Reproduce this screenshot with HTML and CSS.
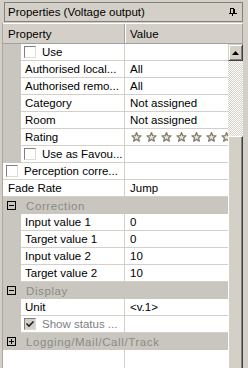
FILE: index.html
```html
<!DOCTYPE html>
<html lang="en">
<head>
<meta charset="UTF-8">
<meta name="viewport" content="width=device-width, initial-scale=1.0">
<title>Properties</title>
<link rel="stylesheet" href="styles.css">
</head>
<body>
<svg width="0" height="0" class="defs">
    <symbol id="star" viewBox="0 0 22 20">
        <polygon points="11,1.2 13.5,7.3 20.2,7.6 15,11.8 16.7,18.4 11,14.7 5.3,18.4 7,11.8 1.8,7.6 8.5,7.3" fill="#ebe6d8" stroke="#877d6c" stroke-width="2.6" stroke-linejoin="round"/>
    </symbol>
</svg>
<div class="panel">
    <div class="title">
        <span>Properties (Voltage output)</span>
        <svg class="pin" width="8" height="8" viewBox="0 0 8 8" shape-rendering="crispEdges">
            <path d="M1 0h4v1H1zM1 1h1v4H1zM4 1h2v4H4zM0 5h8v1H0zM3 6h1v2H3z" fill="#000"/>
        </svg>
    </div>
    <div class="grid">
        <div class="head">
            <div class="hcell prop">Property</div>
            <div class="hcell val">Value</div>
        </div>
        <div class="body">
            <div class="rows">
                <div class="row sub"><div class="gutter"></div><div class="cell prop chk"><span class="check"></span>Use</div><div class="cell val"></div></div>
                <div class="row sub"><div class="gutter"></div><div class="cell prop">Authorised local...</div><div class="cell val">All</div></div>
                <div class="row sub"><div class="gutter"></div><div class="cell prop">Authorised remo...</div><div class="cell val">All</div></div>
                <div class="row sub"><div class="gutter"></div><div class="cell prop">Category</div><div class="cell val">Not assigned</div></div>
                <div class="row sub"><div class="gutter"></div><div class="cell prop">Room</div><div class="cell val">Not assigned</div></div>
                <div class="row sub"><div class="gutter"></div><div class="cell prop">Rating</div>
                    <div class="cell val">
                        <div class="stars">
                            <svg><use href="#star"/></svg><svg><use href="#star"/></svg><svg><use href="#star"/></svg><svg><use href="#star"/></svg><svg><use href="#star"/></svg><svg><use href="#star"/></svg><svg><use href="#star"/></svg>
                        </div>
                    </div>
                </div>
                <div class="row sub"><div class="gutter"></div><div class="cell prop chk"><span class="check"></span>Use as Favou...</div><div class="cell val"></div></div>
                <div class="row"><div class="cell prop chk"><span class="check"></span>Perception corre...</div><div class="cell val"></div></div>
                <div class="row"><div class="cell prop">Fade Rate</div><div class="cell val">Jump</div></div>

                <div class="row cat"><span class="toggle open"></span>Correction</div>
                <div class="row sub"><div class="gutter"></div><div class="cell prop">Input value 1</div><div class="cell val">0</div></div>
                <div class="row sub"><div class="gutter"></div><div class="cell prop">Target value 1</div><div class="cell val">0</div></div>
                <div class="row sub"><div class="gutter"></div><div class="cell prop">Input value 2</div><div class="cell val">10</div></div>
                <div class="row sub"><div class="gutter"></div><div class="cell prop">Target value 2</div><div class="cell val">10</div></div>

                <div class="row cat"><span class="toggle open"></span>Display</div>
                <div class="row sub"><div class="gutter"></div><div class="cell prop">Unit</div><div class="cell val">&lt;v.1&gt;</div></div>
                <div class="row sub disabled"><div class="gutter"></div><div class="cell prop chk"><span class="check on"><svg width="10" height="10" viewBox="0 0 10 10"><path d="M1.5 4.5l2.5 2.5 4.5-4.5" fill="none" stroke="#222" stroke-width="1.6"/></svg></span>Show status ...</div><div class="cell val"></div></div>

                <div class="row cat"><span class="toggle"></span>Logging/Mail/Call/Track</div>
                <div class="row empty"><div class="cell prop"></div><div class="cell val"></div></div>
            </div>
            <div class="vscroll">
                <div class="sbtn">
                    <svg width="7" height="4" viewBox="0 0 7 4"><polygon points="0,4 7,4 3.5,0" fill="#000"/></svg>
                </div>
                <div class="track"></div>
                <div class="thumb"></div>
            </div>
        </div>
    </div>
</div>
</body>
</html>
```

FILE: styles.css
```css
html, body {
    margin: 0;
    padding: 0;
}
body {
    width: 248px;
    height: 368px;
    overflow: hidden;
    background-color: #d4d0c8;
    font-family: "Liberation Sans", Arial, sans-serif;
    font-size: 11.5px;
    color: #000;
}
.defs {
    position: absolute;
}
.panel {
    padding: 2px 0 0 2px;
    width: 241px;
}
.title {
    margin: 0 0 1px 2px;
    height: 20px;
    box-sizing: border-box;
    border: 1px solid #808080;
    display: flex;
    align-items: center;
    justify-content: space-between;
    padding: 0 5px 1px 3px;
}
.pin {
    display: block;
}
.grid {
    border-left: 1px solid #aca89f;
}
.head {
    display: flex;
    height: 21px;
    box-sizing: border-box;
    border-top: 1px solid #fff;
    border-bottom: 1px solid #a0a0a0;
    border-right: 1px solid #a0a0a0;
}
.hcell {
    display: flex;
    align-items: center;
    padding-left: 5px;
}
.hcell.prop {
    width: 116px;
    border-right: 1px solid #a0a0a0;
}
.hcell.val {
    flex: 1;
    border-left: 1px solid #fff;
    padding-left: 4px;
}
.body {
    display: flex;
}
.rows {
    width: 225px;
    background-color: #fff;
}
.row {
    display: flex;
    height: 17px;
}
.gutter {
    width: 18px;
    flex: none;
    background-color: #c9c6bf;
}
.cell {
    box-sizing: border-box;
    border-bottom: 1px solid #d4d0c8;
    display: flex;
    align-items: center;
    white-space: nowrap;
    overflow: hidden;
}
.cell.prop {
    flex: 1;
    padding-left: 5px;
}
.sub .cell.prop {
    padding-left: 4px;
}
.cell.prop.chk {
    padding-left: 3px;
}
.cell.val {
    width: 104px;
    flex: none;
    border-left: 1px solid #d4d0c8;
    padding-left: 5px;
}
.check {
    width: 12px;
    height: 12px;
    box-sizing: border-box;
    flex: none;
    border: 1px solid;
    border-color: #808080 #dedbd4 #dedbd4 #808080;
    background-color: #fff;
    margin-right: 6px;
    display: flex;
    align-items: center;
    justify-content: center;
}
.check.on {
    background-color: #d4d0c8;
}
.check svg {
    display: block;
}
.disabled .cell {
    color: #808080;
}
.stars {
    display: flex;
    gap: 4px;
    margin-left: 1px;
}
.stars svg {
    width: 11px;
    height: 10px;
    flex: none;
}
.row.cat {
    background-color: #c9c6bf;
    align-items: center;
    color: #8c8a86;
    letter-spacing: 0.6px;
    white-space: nowrap;
}
.toggle {
    position: relative;
    width: 9px;
    height: 9px;
    box-sizing: border-box;
    border: 1px solid #000;
    margin: 0 10px 0 4px;
    flex: none;
}
.toggle::before,
.toggle::after {
    content: "";
    position: absolute;
    background-color: #000;
}
.toggle::before {
    left: 1px;
    top: 3px;
    width: 5px;
    height: 1px;
}
.toggle::after {
    left: 3px;
    top: 1px;
    width: 1px;
    height: 5px;
}
.toggle.open::after {
    display: none;
}
.row.empty {
    height: 20px;
}
.row.empty .cell {
    border-bottom: none;
}
.vscroll {
    width: 15px;
    display: flex;
    flex-direction: column;
}
.sbtn {
    height: 17px;
    box-sizing: border-box;
    border: 1px solid;
    border-color: #d4d0c8 #404040 #404040 #d4d0c8;
    box-shadow: inset 1px 1px #fff, inset -1px -1px #808080;
    display: flex;
    align-items: center;
    justify-content: center;
}
.sbtn svg {
    display: block;
}
.track {
    height: 75px;
    background: repeating-conic-gradient(#fff 0% 25%, #d4d0c8 0% 50%) 0 0 / 2px 2px;
}
.thumb {
    flex: 1;
    height: 240px;
    box-sizing: border-box;
    border-top: 1px solid #fff;
    border-left: 1px solid #fff;
    border-right: 1px solid #404040;
    box-shadow: inset -1px 0 #808080;
}
```
